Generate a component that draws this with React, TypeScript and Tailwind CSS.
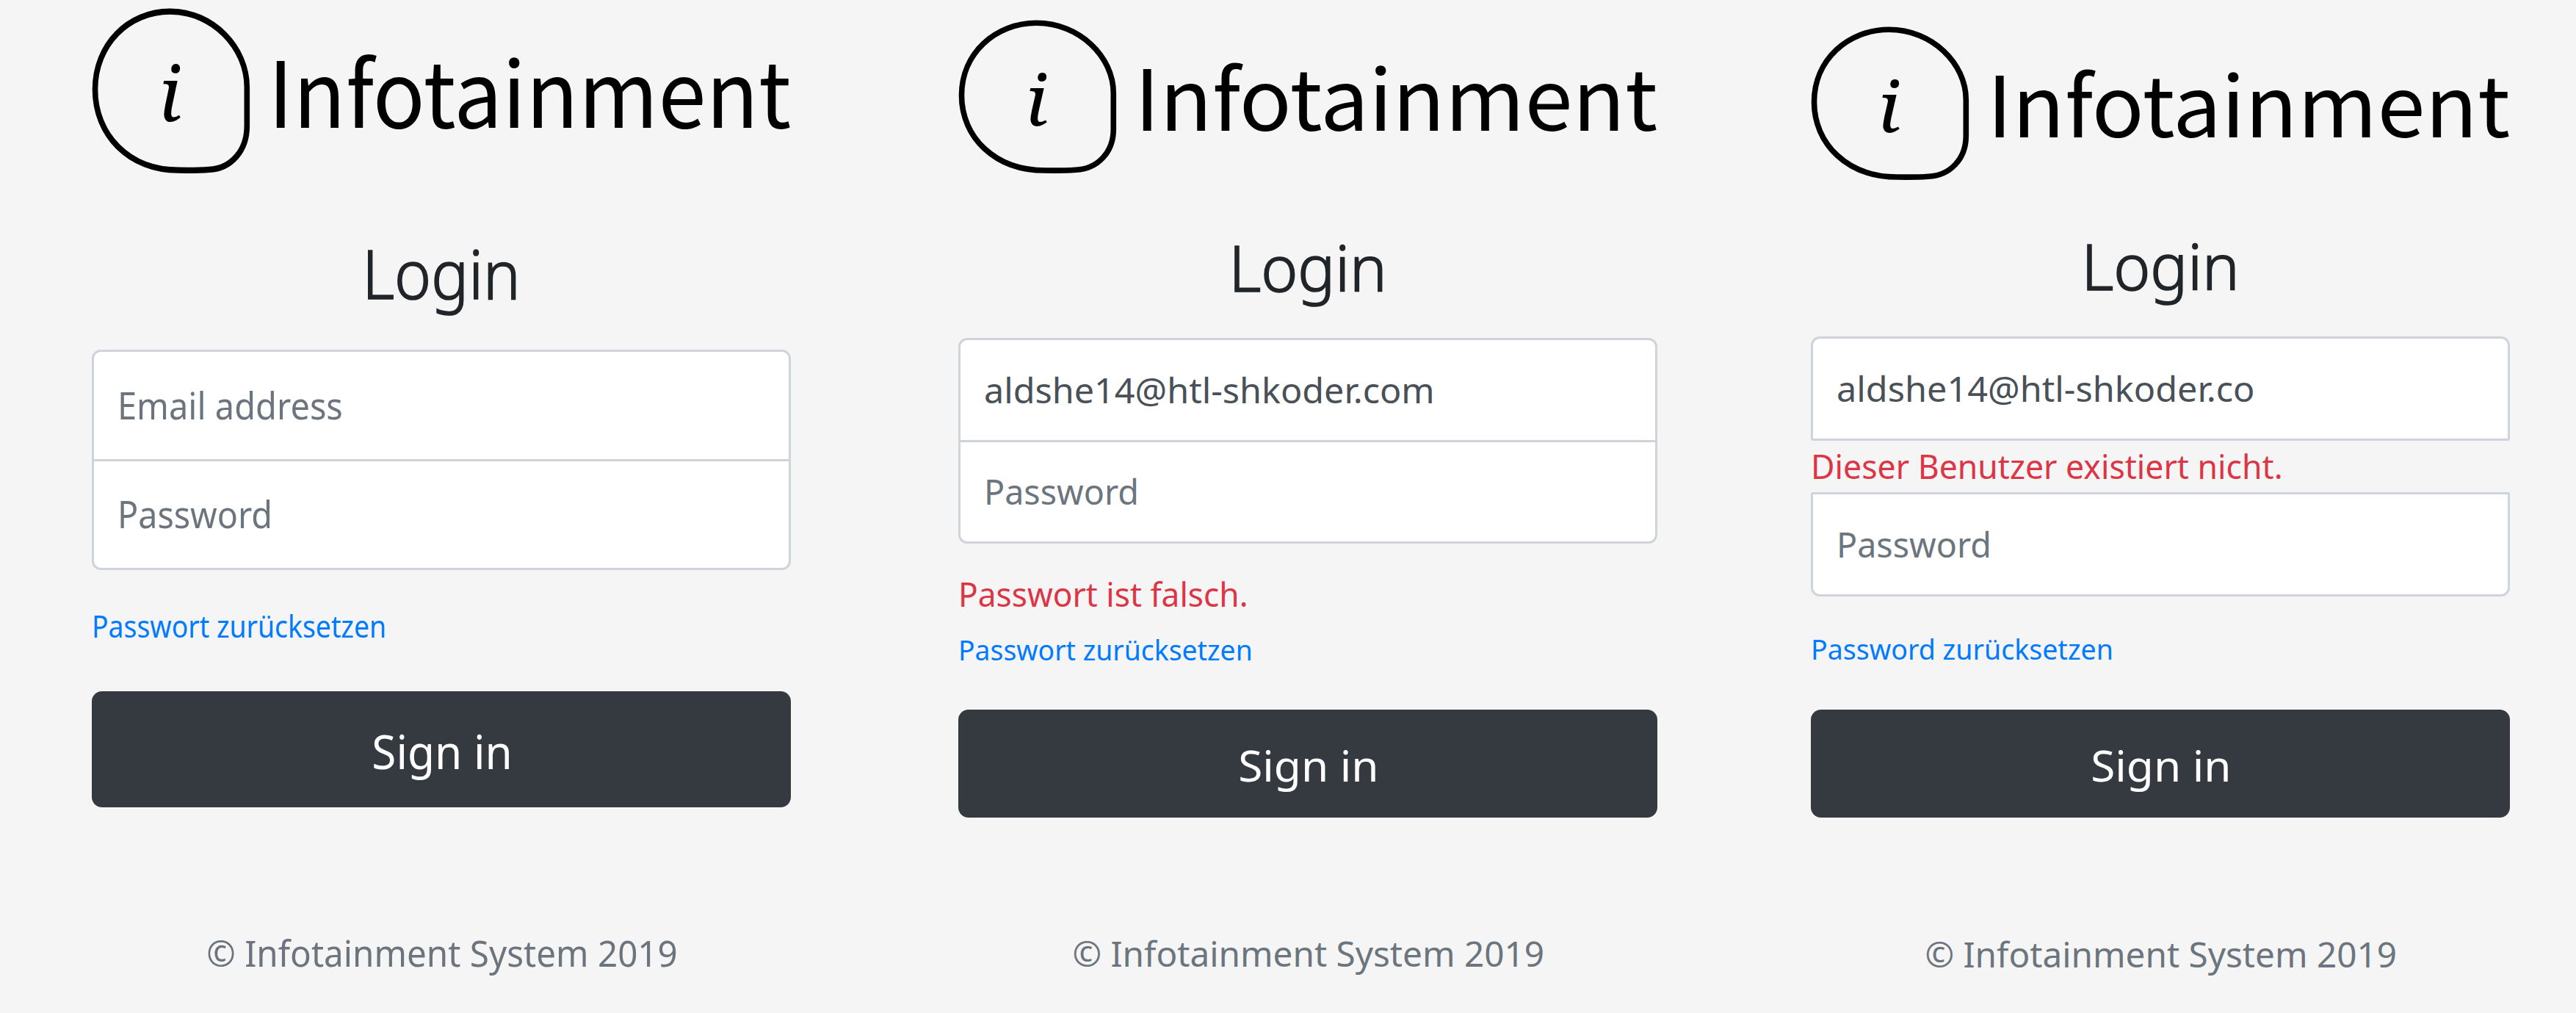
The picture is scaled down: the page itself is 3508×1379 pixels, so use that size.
type Panel = {
  frame: string;
  logo: string;
  title: string;
  fields: string;
  email: { text: string; box: string; type: string };
  password: { box: string; type: string };
  emailError?: string;
  passwordError?: string;
  link: { text: string; type: string };
  button: string;
  buttonLabel: string;
  footer: string;
  footerLabel: string;
};

const panels: Panel[] = [
  {
    frame: "pt-[11px]",
    logo: "h-[225px]",
    title: "mt-[81px] text-[92px] scale-x-[0.924]",
    fields: "mt-[49px]",
    email: {
      text: "Email address",
      box: "h-[152px] rounded-t-xl",
      type: "text-[50.5px] scale-x-[0.93] text-[#6c757d]",
    },
    password: { box: "-mt-[3px] h-[151px] rounded-b-xl", type: "text-[50.5px] scale-x-[0.924]" },
    link: { text: "Passwort zurücksetzen", type: "mt-[46px] text-[41px] scale-x-[0.911]" },
    button: "mt-[59px] h-[158px]",
    buttonLabel: "text-[63px] scale-x-[0.957]",
    footer: "mt-[163px]",
    footerLabel: "text-[50px] scale-x-[0.952]",
  },
  {
    frame: "ml-[228px] pt-[27px]",
    logo: "h-[209px]",
    title: "mt-[73px] text-[86px] scale-x-[0.988]",
    fields: "mt-[41px]",
    email: {
      text: "aldshe14@htl-shkoder.com",
      box: "h-[142px] rounded-t-xl",
      type: "text-[47px] scale-x-[1.032] text-[#495057]",
    },
    password: { box: "-mt-[3px] h-[141px] rounded-b-xl", type: "text-[47px] scale-x-[0.992]" },
    passwordError: "Passwort ist falsch.",
    link: { text: "Passwort zurücksetzen", type: "mt-4 text-[38px] scale-x-[0.982]" },
    button: "mt-[52px] h-[147px]",
    buttonLabel: "text-[58.5px] scale-x-[1.03]",
    footer: "mt-[150px]",
    footerLabel: "text-[46.7px] scale-x-[1.021]",
  },
  {
    frame: "ml-[209px] pt-9",
    logo: "h-[209px]",
    title: "mt-[62px] text-[86px] scale-x-[0.988]",
    fields: "mt-[41px]",
    email: {
      text: "aldshe14@htl-shkoder.co",
      box: "h-[142px] rounded-t-xl rounded-b-[3px]",
      type: "text-[47px] scale-x-[1.034] text-[#495057]",
    },
    emailError: "Dieser Benutzer existiert nicht.",
    password: {
      box: "mt-1.5 h-[142px] rounded-t-[3px] rounded-b-xl",
      type: "text-[47px] scale-x-[0.992]",
    },
    link: { text: "Password zurücksetzen", type: "mt-[41px] text-[38px] scale-x-[0.988]" },
    button: "mt-[53px] h-[147px]",
    buttonLabel: "text-[58.5px] scale-x-[1.03]",
    footer: "mt-[151px]",
    footerLabel: "text-[46.7px] scale-x-[1.021]",
  },
];

function Logo({ className }: { className: string }) {
  return (
    <svg
      className={`block w-[952px] shrink-0 overflow-visible ${className}`}
      viewBox="0 0 952 209"
      preserveAspectRatio="none"
      role="img"
      aria-label="Infotainment"
    >
      <path
        d="M4.5 102.8C4.5 46 50 4.3 106.5 4.3C165 4.3 211.3 50 211.3 100V149C211.3 180 190 203 160 204.2C146 205.2 132 205.2 118 205C50 205 4.5 160 4.5 102.8Z"
        fill="none"
        stroke="#000"
        strokeWidth="7.6"
      />
      <text
        x="0"
        y="0"
        transform="translate(91 143.5) scale(1.08 1)"
        className="font-['Noto_Serif',serif] text-[95px] italic"
      >
        i
      </text>
      <text
        x="0"
        y="0"
        transform="translate(240 151) scale(1.02 1)"
        className="font-['Noto_Sans_CJK_JP',sans-serif] text-[115px]"
      >
        Infotainment
      </text>
    </svg>
  );
}

function Field({ box, type, children }: { box: string; type: string; children: string }) {
  return (
    <div className={`flex items-center border-[3px] border-[#ced4da] bg-white pl-8 ${box}`}>
      <span className={`origin-left leading-none whitespace-nowrap ${type}`}>{children}</span>
    </div>
  );
}

function LoginPanel({ p }: { p: Panel }) {
  return (
    <section className={`flex w-[952px] shrink-0 flex-col ${p.frame}`}>
      <Logo className={p.logo} />
      <h1
        className={`text-center leading-[110px] font-light text-[#212529] [-webkit-text-stroke:1.6px_#212529] ${p.title}`}
      >
        Login
      </h1>
      <div className={`flex flex-col ${p.fields}`}>
        <Field box={p.email.box} type={p.email.type}>
          {p.email.text}
        </Field>
        {p.emailError && (
          <p className="mt-1 origin-left scale-x-[0.969] text-[46px] leading-[60px] text-[#dc3545]">
            {p.emailError}
          </p>
        )}
        <Field box={p.password.box} type={`text-[#6c757d] ${p.password.type}`}>
          Password
        </Field>
      </div>
      {p.passwordError && (
        <p className="mt-[38px] origin-left scale-x-[0.962] text-[46px] leading-[60px] text-[#dc3545]">
          {p.passwordError}
        </p>
      )}
      <a className={`origin-left leading-[60px] text-[#007bff] ${p.link.type}`}>{p.link.text}</a>
      <button
        className={`flex items-center justify-center rounded-[14px] bg-[#343a40] pt-1 pl-0.5 text-white ${p.button}`}
      >
        <span className={`leading-none ${p.buttonLabel}`}>Sign in</span>
      </button>
      <p className={`pl-0.5 text-center leading-[70px] text-[#6c757d] ${p.footer}`}>
        <span className={`inline-block ${p.footerLabel}`}>© Infotainment System 2019</span>
      </p>
    </section>
  );
}

export default function App() {
  return (
    <main className="flex h-[1379px] w-[3508px] items-start overflow-hidden bg-[#f5f5f5] pl-[125px] font-['Noto_Sans',sans-serif]">
      {panels.map((p, i) => (
        <LoginPanel key={i} p={p} />
      ))}
    </main>
  );
}
